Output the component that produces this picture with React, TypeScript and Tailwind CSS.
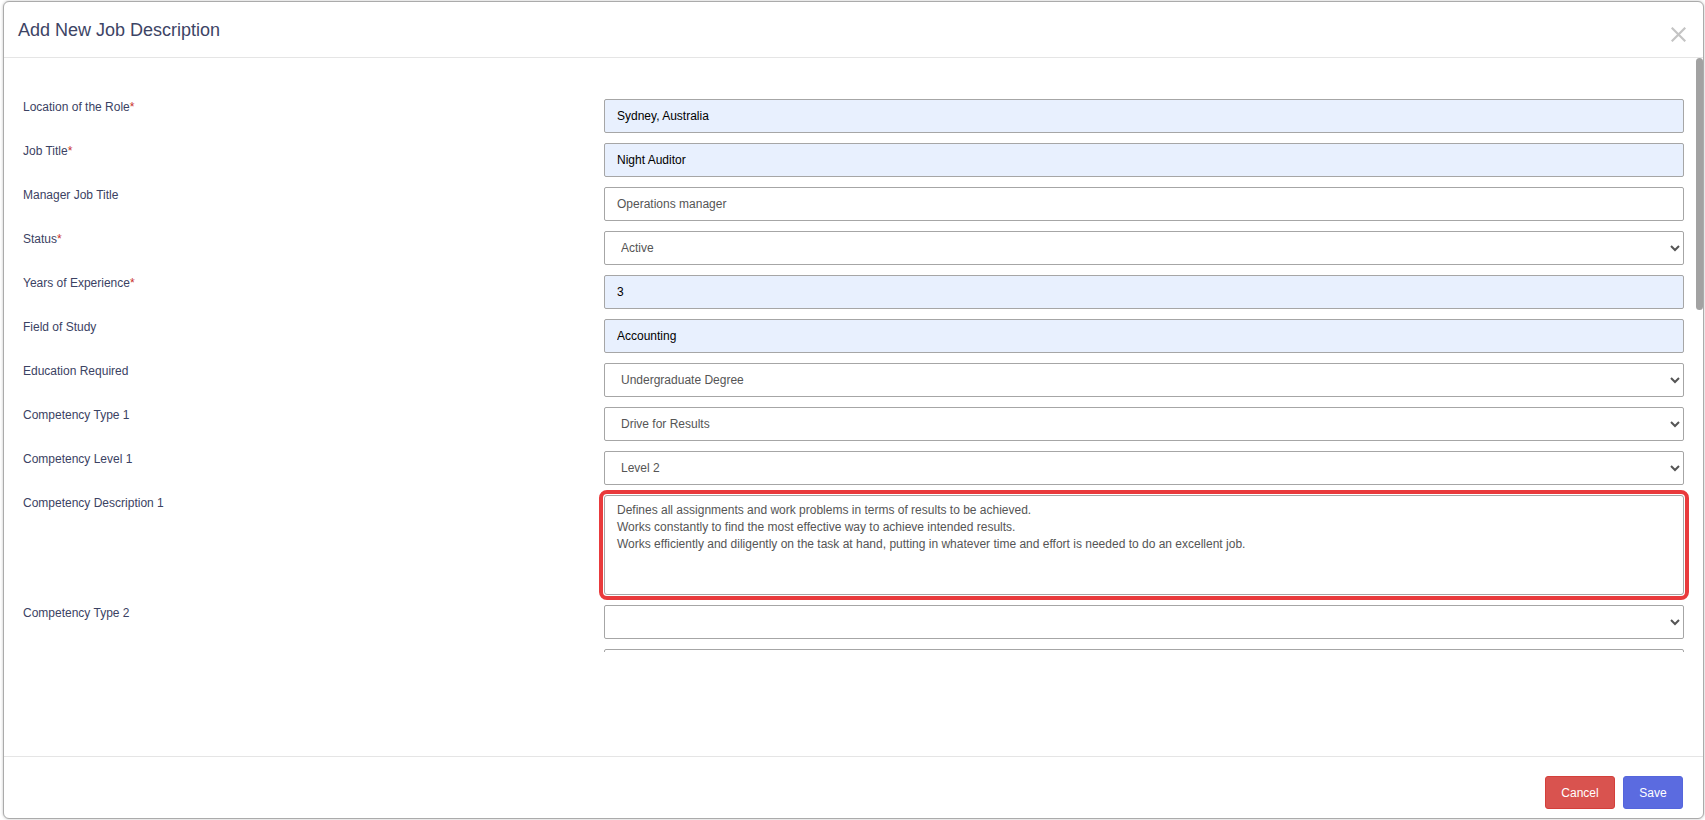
import { useState } from "react"

type Field = {
  label: string
  required?: boolean
  kind: "input" | "select" | "textarea"
  value: string
  filled?: boolean
  focused?: boolean
  options?: string[]
}

const fields: Field[] = [
  { label: "Location of the Role", required: true, kind: "input", value: "Sydney, Australia", filled: true },
  { label: "Job Title", required: true, kind: "input", value: "Night Auditor", filled: true },
  { label: "Manager Job Title", kind: "input", value: "Operations manager" },
  { label: "Status", required: true, kind: "select", value: "Active", options: ["Active", "Inactive"] },
  { label: "Years of Experience", required: true, kind: "input", value: "3", filled: true },
  { label: "Field of Study", kind: "input", value: "Accounting", filled: true },
  {
    label: "Education Required",
    kind: "select",
    value: "Undergraduate Degree",
    options: ["High School", "Diploma", "Undergraduate Degree", "Postgraduate Degree"],
  },
  {
    label: "Competency Type 1",
    kind: "select",
    value: "Drive for Results",
    options: ["Drive for Results", "Customer Focus", "Teamwork"],
  },
  { label: "Competency Level 1", kind: "select", value: "Level 2", options: ["Level 1", "Level 2", "Level 3"] },
  {
    label: "Competency Description 1",
    kind: "textarea",
    focused: true,
    value:
      "Defines all assignments and work problems in terms of results to be achieved.\nWorks constantly to find the most effective way to achieve intended results.\nWorks efficiently and diligently on the task at hand, putting in whatever time and effort is needed to do an excellent job.",
  },
  { label: "Competency Type 2", kind: "select", value: "", options: ["", "Drive for Results", "Customer Focus"] },
  { label: "Competency Level 2", kind: "select", value: "", options: ["", "Level 1", "Level 2"] },
]

const base =
  "w-full border border-[#a6a6a6] rounded-[2px] text-[12px] leading-[17px] outline-none"

function Control({ f }: { f: Field }) {
  if (f.kind === "select") {
    return (
      <select
        defaultValue={f.value}
        className={`${base} h-[34px] px-3 pr-2 text-[#555] bg-white`}
      >
        {f.options?.map((o) => (
          <option key={o} value={o}>
            {o}
          </option>
        ))}
      </select>
    )
  }
  if (f.kind === "textarea") {
    return (
      <textarea
        defaultValue={f.value}
        className={`${base} block h-[100px] resize-none px-3 py-1.5 text-[#555] bg-white ${
          f.focused ? "outline-4 outline-solid outline-offset-1 outline-[#e93a3c] rounded-[3px]" : ""
        }`}
      />
    )
  }
  return (
    <input
      type="text"
      defaultValue={f.value}
      className={`${base} h-[34px] px-3 ${f.filled ? "bg-[#e8f0fe] text-black" : "bg-white text-[#555]"}`}
    />
  )
}

export default function App() {
  const [open] = useState(true)
  if (!open) return null

  return (
    <div className="w-[1705px] h-[820px] bg-white font-['Liberation_Sans',Arial,sans-serif] pt-px pl-[3px]">
      <div className="w-[1701px] h-[818px] flex flex-col border border-[#ababab] rounded-md bg-white shadow-[0_0_3px_rgba(0,0,0,0.25)] overflow-hidden">
        {/* header */}
        <div className="flex items-center justify-between h-[56px] px-[14px] border-b border-[#e5e5e5] shrink-0">
          <h4 className="text-[18px] leading-[26px] text-[#3d4465]">Add New Job Description</h4>
          <button className="mr-[3px] mt-[9px] text-[#c4c4c4]" aria-label="Close">
            <svg width="15" height="15" viewBox="0 0 15 15" fill="none">
              <path d="M1.5 1.5L13.5 13.5M13.5 1.5L1.5 13.5" stroke="currentColor" strokeWidth="2.2" strokeLinecap="square" />
            </svg>
          </button>
        </div>

        {/* body + scrollbar */}
        <div className="flex h-[594px] shrink-0">
          <div className="flex-1 overflow-hidden pl-[19px] pr-[11px] pt-[41px]">
            <div className="flex flex-col gap-[10px]">
              {fields.map((f) => (
                <div key={f.label} className="flex items-start">
                  <label className="w-[581px] shrink-0 text-[12px] leading-4 text-[#3b4263]">
                    {f.label}
                    {f.required && <span className="text-[#c9302c]">*</span>}
                  </label>
                  <div className="flex-1">
                    <Control f={f} />
                  </div>
                </div>
              ))}
            </div>
          </div>
          <div className="w-2 shrink-0 pl-px">
            <div className="h-[252px] w-[7px] rounded bg-[#a2a2a2]" />
          </div>
        </div>

        <div className="flex-1" />

        {/* footer */}
        <div className="flex justify-end gap-2 border-t border-[#e5e5e5] pt-[19px] pb-[9px] pr-5 shrink-0">
          <button className="h-[33px] w-[70px] rounded-[3px] border border-[#d43f3a] bg-[#d9534f] text-[12px] text-white">
            Cancel
          </button>
          <button className="h-[33px] w-[60px] rounded-[3px] border border-[#5566dc] bg-[#5b6be0] text-[12px] text-white">
            Save
          </button>
        </div>
      </div>
    </div>
  )
}
